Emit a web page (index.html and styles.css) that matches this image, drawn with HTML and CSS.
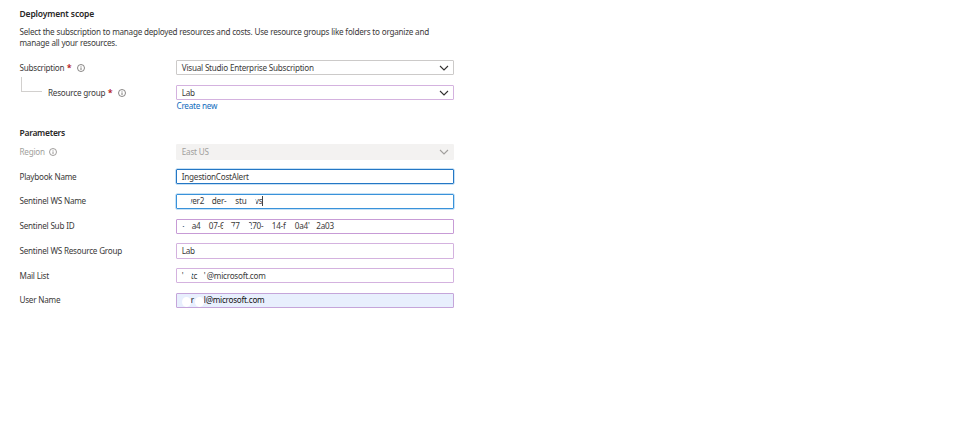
FILE: index.html
```
<!DOCTYPE html>
<html lang="en">
<head>
<meta charset="utf-8">
<title>Deployment scope</title>
<link rel="stylesheet" href="styles.css">
</head>
<body>
<svg class="defs" aria-hidden="true">
  <symbol id="info" viewBox="0 0 8 8"><circle cx="4" cy="4" r="3.5" fill="none" stroke="currentColor" stroke-width=".75"/><path d="M4 3.4V6" stroke="currentColor" stroke-width=".8"/><circle cx="4" cy="2.3" r=".48" fill="currentColor"/></symbol>
  <symbol id="chevron" viewBox="0 0 10 6"><path d="M1 1l4 4 4-4" fill="none" stroke="currentColor" stroke-width="1.1"/></symbol>
</svg>
<main class="form">
  <h2 class="scope-title">Deployment scope</h2>
  <p class="intro">Select the subscription to manage deployed resources and costs. Use resource groups like folders to organize and<br>manage all your resources.</p>
  <div class="row">
    <div class="label"><span>Subscription</span><b class="req">*</b><svg class="info"><use href="#info"/></svg></div>
    <div class="box gray"><span>Visual Studio Enterprise Subscription</span><svg class="chevron"><use href="#chevron"/></svg></div>
  </div>
  <div class="row group-row">
    <div class="label nested"><i class="branch"></i><span>Resource group</span><b class="req">*</b><svg class="info"><use href="#info"/></svg></div>
    <div class="box light"><span>Lab</span><svg class="chevron"><use href="#chevron"/></svg></div>
  </div>
  <a class="create">Create new</a>
  <h2 class="params-title">Parameters</h2>
  <div class="row disabled">
    <div class="label"><span>Region</span><svg class="info"><use href="#info"/></svg></div>
    <div class="box off"><span>East US</span><svg class="chevron"><use href="#chevron"/></svg></div>
  </div>
  <div class="row"><div class="label"><span>Playbook Name</span></div><div class="box dark-blue"><span>IngestionCostAlert</span></div></div>
  <div class="row"><div class="label"><span>Sentinel WS Name</span></div>
    <div class="box blue parts"><span class="s-ver">ver2</span><span class="s-der">der-</span><span class="s-stu">stu</span><span class="s-vs">vs</span><i class="caret"></i><i class="mask m-ws"></i><i class="mask m-ws2"></i><i class="mask m-ws3"></i></div></div>
  <div class="row"><div class="label"><span>Sentinel Sub ID</span></div>
    <div class="box purple parts"><span class="d0">-</span><span class="d1">a4</span><span class="d2">07-6</span><span class="d3">77</span><span class="d4">270-</span><span class="d5">14-f</span><span class="d6">0a4'</span><span>2a03</span><i class="mask m-id1"></i><i class="mask m-id2"></i><i class="mask m-id3"></i><i class="mask m-id4"></i></div></div>
  <div class="row"><div class="label"><span>Sentinel WS Resource Group</span></div><div class="box light"><span>Lab</span></div></div>
  <div class="row"><div class="label"><span>Mail List</span></div>
    <div class="box light parts"><span class="t0">'</span><span class="t1">tc</span><span class="t2">'</span><span class="mail">@microsoft.com</span><i class="mask m-mail"></i><i class="mask m-mail2"></i></div></div>
  <div class="row"><div class="label"><span>User Name</span></div>
    <div class="box filled parts"><span class="u1">r</span><span class="mail">l@microsoft.com</span><i class="mask m-user"></i><i class="mask m-user2"></i></div></div>
</main>
</body>
</html>
```
FILE: styles.css
```
* { box-sizing: border-box; }
body { margin: 0; background: #fff; color: #3b3a39; font: 8.15px/11px "Noto Sans", "Open Sans", sans-serif; letter-spacing: -.24px; word-spacing: .15px; }
.defs { position: absolute; width: 0; height: 0; }
.form { width: 454.5px; padding: 8px 0 0 19.5px; }
h2 { margin: 0; font-size: 8.5px; line-height: 12px; font-weight: 600; color: #292827; letter-spacing: -.15px; }
.intro { margin: 6px 0 12.2px; white-space: nowrap; }
.row { display: grid; grid-template-columns: 156.7px 278px; height: 15.3px; margin-bottom: 9.4px; align-items: center; }
.label { display: flex; align-items: center; white-space: nowrap; }
.row span { padding-bottom: 1px; }
.req { color: #b3141c; margin-left: 2.5px; font-size: 9px; font-weight: 600; }
.info { width: 8px; height: 8px; margin-left: 5.5px; color: #605e5c; overflow: visible; }
.nested { padding-left: 28.5px; position: relative; }
.branch { position: absolute; left: 1.5px; top: -10px; width: 21px; height: 15px; border: solid #d2d0ce; border-width: 0 0 1px 1px; }
.box { position: relative; display: flex; align-items: center; height: 15.3px; padding: 0 4.6px; border: 1px solid; border-radius: 1px; white-space: nowrap; overflow: hidden; }
.chevron { width: 10px; height: 6px; margin-left: auto; color: #323130; }
.gray { border-color: #cccac9; }
.light { border-color: #d4b2df; }
.purple { border-color: #c79bd6; }
.blue, .dark-blue { border-color: #3992da; box-shadow: 0 0 0 .5px #8fc3ec; }
.dark-blue { border-color: #2477c5; }
.filled { border-color: #c5a5da; background: #e8effd; color: #111; }
.off { background: #f3f2f1; border-color: #f3f2f1; }
.disabled, .disabled .chevron { color: #a19f9d; }
.disabled .info { color: #807e7c; margin-left: 4.5px; }
.group-row { margin-bottom: 0; }
.create { display: block; margin: -.6px 0 16.6px 157px; color: #0f6cbd; }
.params-title { margin-bottom: 5.3px; letter-spacing: -.27px; }
.parts span { flex: none; }
.s-ver { margin-left: 6.5px; width: 23.5px; }
.s-der { width: 23.5px; }
.s-stu { width: 19.5px; }
.caret { width: 1px; height: 10px; background: #444; }
.d0 { width: 10px; }
.d1 { width: 17px; }
.d2 { width: 22px; }
.d3 { width: 17px; }
.d4 { width: 24px; }
.d5 { width: 23px; }
.d6 { width: 21.5px; }
.t0 { width: 9px; }
.t1 { width: 13px; }
.t2 { width: 3px; }
.u1 { margin-left: 9px; width: 13px; }
.mask { position: absolute; background: #fff; border-radius: 50%; }
.m-ws { left: 5px; top: 2px; width: 9px; height: 10px; }
.m-ws2 { left: 72px; top: 2px; width: 6.5px; height: 10px; }
.m-ws3 { left: 6px; bottom: -2px; width: 7px; height: 4px; }
.m-id1 { left: 1px; top: 2px; width: 5px; height: 6px; }
.m-id2 { left: 46px; top: 2px; width: 4px; height: 9px; }
.m-id3 { left: 51px; top: 5px; width: 6px; height: 8px; }
.m-id4 { left: 67px; top: 2px; width: 7px; height: 10px; }
.m-mail { left: 8px; top: 1px; width: 7px; height: 8px; }
.m-mail2 { left: 23px; top: 5px; width: 5px; height: 8px; }
.m-user { left: 5px; top: 3px; width: 9px; height: 10px; }
.m-user2 { left: 18px; top: 3px; width: 9px; height: 10px; }
```
